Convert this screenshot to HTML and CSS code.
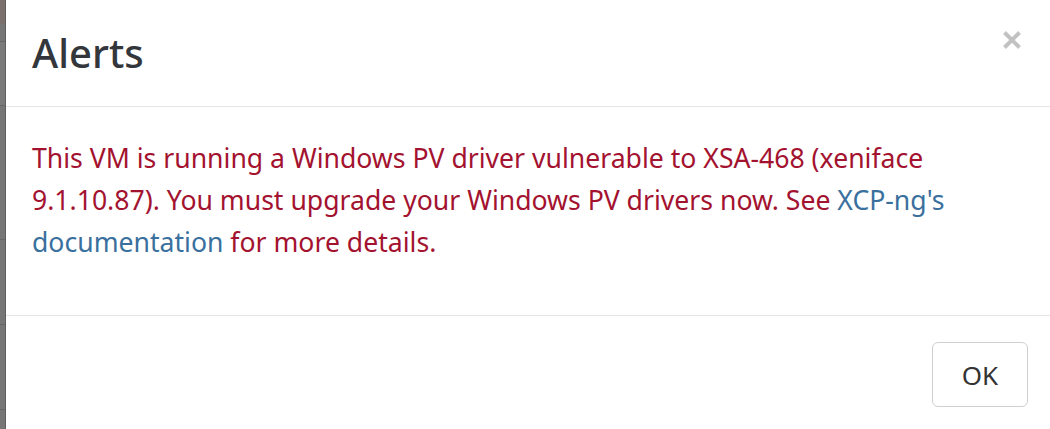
FILE: index.html
```html
<!DOCTYPE html>
<html>
	<head>
		<meta charset="UTF-8">
		<title>Alerts</title>
		<link rel="stylesheet" href="styles.css">
	</head>
	<body>
		<div class="page">
			<div class="backdrop">
				<div class="seg seg1"></div>
				<div class="seg seg2"></div>
				<div class="seg seg3"></div>
				<div class="seg seg4"></div>
				<div class="seg seg5"></div>
				<div class="seg seg6"></div>
				<div class="seg seg7"></div>
			</div>
			<div class="modal">
				<div class="modal-header">
					<h4 class="modal-title">Alerts</h4>
					<button class="close" type="button">
						<svg width="20" height="20" viewBox="0 0 20 20">
							<path d="M2.5 2.5 L17.5 17.5 M17.5 2.5 L2.5 17.5" stroke="#c2c2c2" stroke-width="4" fill="none"/>
						</svg>
					</button>
				</div>
				<div class="modal-body">
					<p class="text-danger">This VM is running a Windows PV driver vulnerable to XSA-468 (xeniface 9.1.10.87). You must upgrade your Windows PV drivers now. See <a href="#">XCP-ng's documentation</a> for more details.</p>
				</div>
				<div class="modal-footer">
					<button class="btn" type="button">OK</button>
				</div>
			</div>
		</div>
	</body>
</html>
```

FILE: styles.css
```css
*{
	margin: 0;
	padding: 0;
	box-sizing: border-box;
}
body{
	font-family: "Noto Sans", "Open Sans", sans-serif;
	font-size: 26.6px;
	line-height: 42px;
	background: #fff;
	overflow: hidden;
}
.page{
	display: flex;
	height: 429px;
}
.backdrop{
	width: 6px;
	flex-shrink: 0;
	display: flex;
	flex-direction: column;
	border-right: 1px solid #5f5f5f;
}
.seg{
	background: #767676;
	border-bottom: 1px solid #666;
}
.seg1{ height: 24px; background: #7b706e; border-bottom: 0; }
.seg2{ height: 18px; }
.seg3{ height: 64px; background: #7a7a7a; }
.seg4{ height: 134px; }
.seg5{ height: 85px; }
.seg6{ height: 85px; }
.seg7{ flex: 1; border-bottom: 0; }
.modal{
	flex: 1;
	background: #fff;
	display: flex;
	flex-direction: column;
}
.modal-header{
	height: 107px;
	border-bottom: 1px solid #e5e5e5;
	display: flex;
	justify-content: space-between;
	align-items: flex-start;
	padding: 22px 28px 0 26px;
}
.modal-title{
	font-size: 40px;
	font-weight: 500;
	line-height: 56px;
	color: #33373b;
	margin-top: 3px;
}
.close{
	border: 0;
	background: none;
	margin-top: 8px;
	margin-right: 0;
	display: flex;
}
.modal-body{
	height: 209px;
	border-bottom: 1px solid #e5e5e5;
	padding: 30px 28px 0 26px;
}
.text-danger{
	color: #a3122f;
}
a{
	color: #3a709e;
	text-decoration: none;
}
.modal-footer{
	display: flex;
	justify-content: flex-end;
	padding: 26px 22px 0 0;
}
.btn{
	width: 96px;
	height: 65px;
	border: 1px solid #cfcfcf;
	border-radius: 6px;
	background: #fff;
	color: #333;
	font-family: "Noto Sans", "Open Sans", sans-serif;
	font-size: 26px;
}
```
